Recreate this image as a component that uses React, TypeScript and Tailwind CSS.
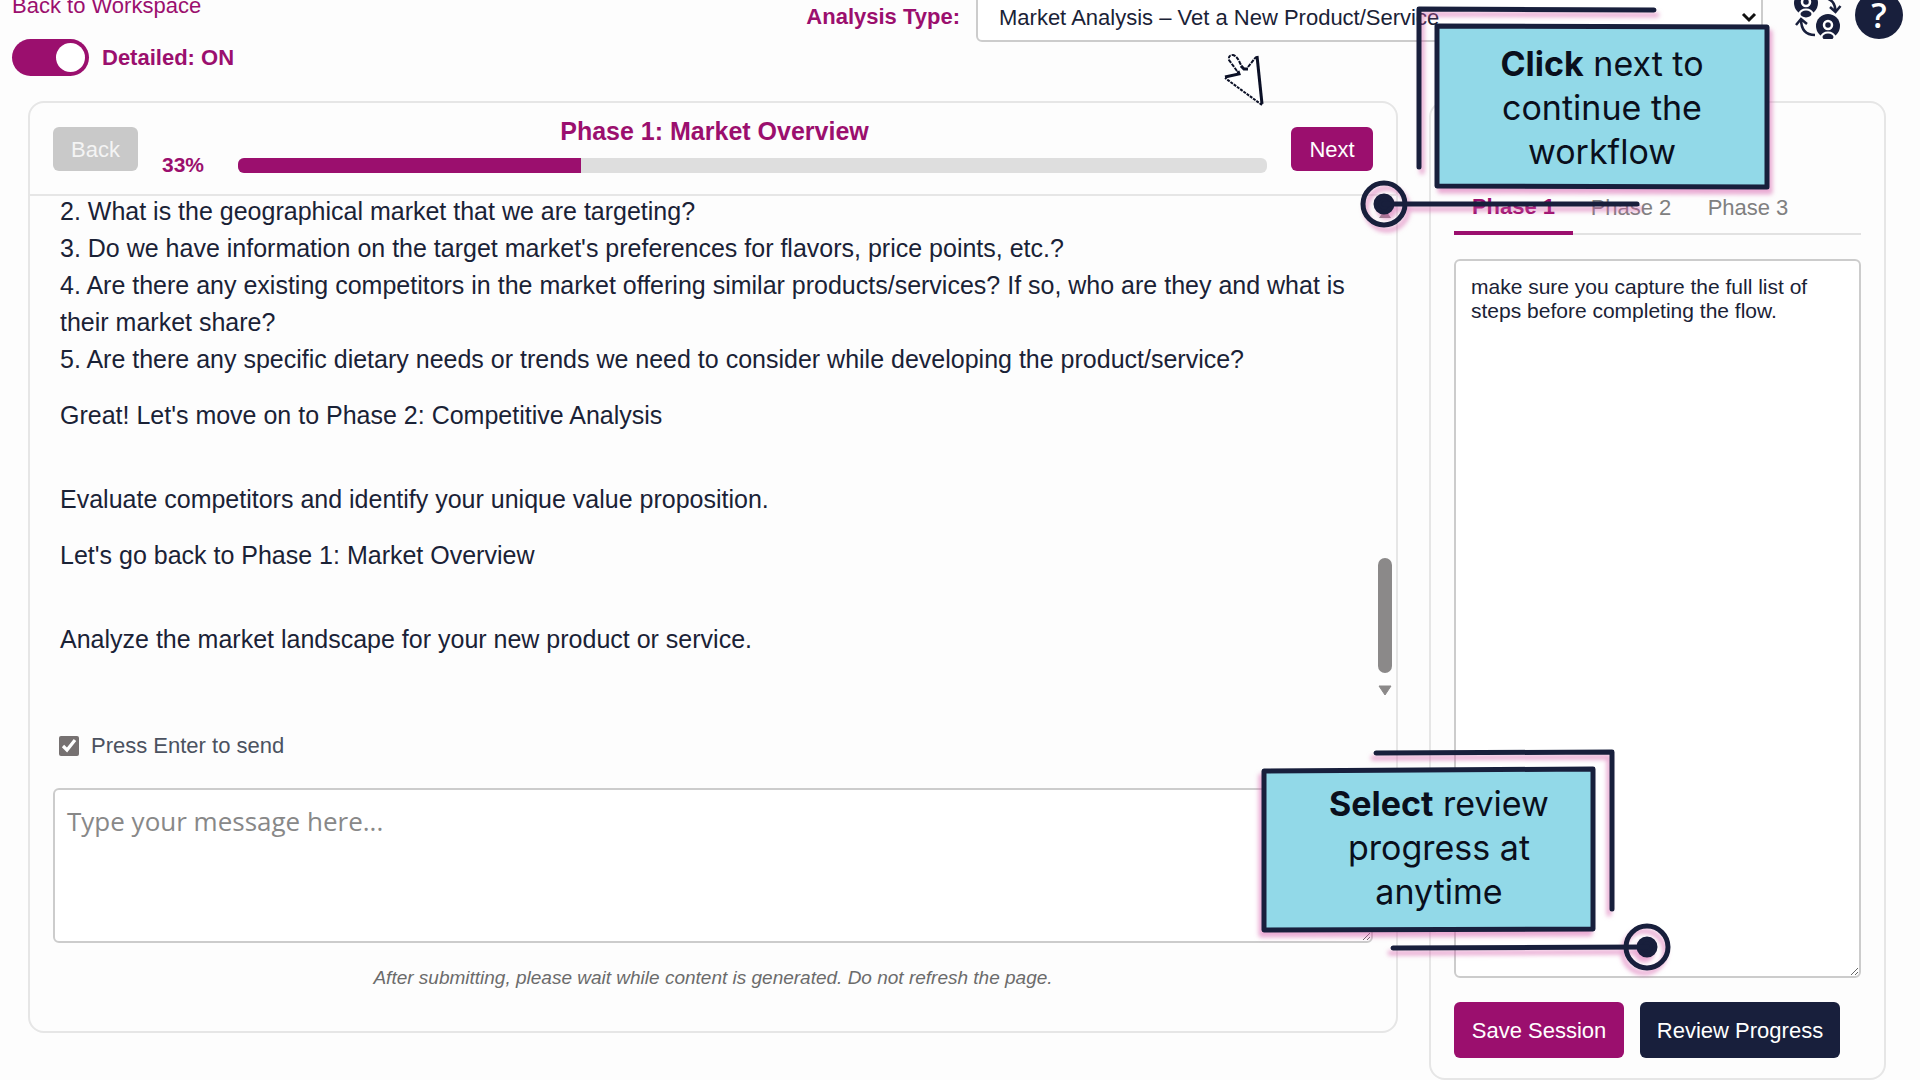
const pink = '#9b0f6e';
const navy = '#181f3c';

const questions = [
  '2. What is the geographical market that we are targeting?',
  "3. Do we have information on the target market's preferences for flavors, price points, etc.?",
  '4. Are there any existing competitors in the market offering similar products/services? If so, who are they and what is their market share?',
  '5. Are there any specific dietary needs or trends we need to consider while developing the product/service?',
];

function SwapUsersIcon() {
  return (
    <svg width="48" height="48" viewBox="0 0 48 48" fill="none">
      <circle cx="12" cy="12" r="12" fill={navy} />
      <circle cx="12" cy="11" r="4" fill={navy} stroke="#fff" strokeWidth="2.500" />
      <ellipse cx="12" cy="23" rx="6.500" ry="4.500" fill={navy} stroke="#fff" strokeWidth="2" />
      <circle cx="34" cy="35" r="12" fill={navy} />
      <circle cx="34" cy="34" r="4" fill={navy} stroke="#fff" strokeWidth="2.500" />
      <ellipse cx="34" cy="46" rx="6.500" ry="4.500" fill={navy} stroke="#fff" strokeWidth="2" />
      <path d="M32 7c6 2 9 5 9.500 13M36 16l5.500 5 5-6" stroke={navy} strokeWidth="2.500" />
      <path d="M21 44c-9 0-14-5-14-16M2 34l5-6 6 5" stroke={navy} strokeWidth="2.500" />
    </svg>
  );
}

function CursorIcon() {
  return (
    <svg className="absolute left-[1222px] top-[51px]" width="44" height="56" viewBox="0 0 44 56" fill="#fff">
      <path d="M35 5L40 54L3 27L17 22L13 18L7 9Q6 4 11 4Q15 5 18 12L20 17H25Z" />
      <g stroke="#0b1026" strokeWidth="2" fill="none">
        <path d="M40 54L3 27" strokeDasharray="3 1" />
        <path d="M3 26L17 23L16 20" strokeWidth="3" />
        <path d="M15 20L7 9Q6 4 11 4Q15 5 18 12L20 16" strokeDasharray="4 1" />
        <path d="M19 15L22 18H26" strokeWidth="3" />
        <path d="M26 16L34 6" strokeDasharray="4 1" />
        <path d="M35 5L40 53" strokeWidth="3" />
      </g>
    </svg>
  );
}

function NextCallout() {
  return (
    <aside className="absolute left-[1350px] top-0 h-[236px] w-[432px]">
      <svg className="absolute inset-0" width="432" height="236" viewBox="0 0 432 236" fill="none">
        <g
          stroke={navy}
          strokeWidth="5"
          strokeLinejoin="round"
          strokeLinecap="round"
          style={{ filter: 'drop-shadow(3px 5px 2px rgba(214,90,170,0.5))' }}
        >
          <path d="M304 10L69 9V167" />
          <path d="M87 26L417 27V187L87 186Z" fill="#92d9e8" />
          <circle cx="34" cy="204" r="21" />
          <circle cx="34" cy="204" r="8" fill={navy} />
          <path d="M34 204H287" />
        </g>
      </svg>
      <p className="absolute left-[122px] top-[42px] w-[260px] text-center font-['Inter'] text-[34px] leading-[44px] text-[#0a0f1c]">
        <b className="font-bold">Click</b> next to continue the workflow
      </p>
    </aside>
  );
}

function ReviewCallout() {
  return (
    <aside className="absolute left-[1250px] top-[740px] h-[240px] w-[430px]">
      <svg className="absolute inset-0" width="430" height="240" viewBox="0 0 430 240" fill="none">
        <g
          stroke={navy}
          strokeWidth="5"
          strokeLinejoin="round"
          strokeLinecap="round"
          style={{ filter: 'drop-shadow(-3px 5px 2px rgba(214,90,170,0.5))' }}
        >
          <path d="M126 13L362 12V169" />
          <path d="M14 31L343 29V189L14 190Z" fill="#92d9e8" />
          <circle cx="397" cy="207" r="21" />
          <circle cx="397" cy="207" r="8" fill={navy} />
          <path d="M143 208L397 207" />
        </g>
      </svg>
      <p className="absolute left-[69px] top-[42px] w-[240px] text-center font-['Inter'] text-[34px] leading-[44px] text-[#0a0f1c]">
        <b className="font-bold">Select</b> review progress at anytime
      </p>
    </aside>
  );
}

export default function App() {
  return (
    <div className="relative h-screen overflow-hidden bg-[#fdfdfd] font-['Liberation_Sans',sans-serif] text-[#1a2236]">
      <header className="-mt-[9px] flex h-[110px] items-start justify-between pl-3 pr-[17px]">
        <div className="flex flex-col gap-[18px]">
          <a href="#workspace" className="text-[22px] leading-[30px]" style={{ color: pink }}>
            Back to Workspace
          </a>
          <label className="flex items-center gap-[13px] text-[22px] font-bold leading-[37px]" style={{ color: pink }}>
            <input type="checkbox" role="switch" defaultChecked className="peer sr-only" />
            <span className="flex h-[37px] w-[77px] items-center justify-end rounded-full bg-[#9b0f6e] pr-1">
              <span className="size-[29px] rounded-full bg-white" />
            </span>
            Detailed: ON
          </label>
        </div>
        <div className="flex items-start">
          <label htmlFor="analysis" className="mr-4 pt-[12px] text-[22px] font-bold leading-[28px]" style={{ color: pink }}>
            Analysis Type:
          </label>
          <div className="relative">
            <select
              id="analysis"
              className="h-[51px] w-[787px] appearance-none rounded-md border-2 border-[#ccc] bg-white px-[21px] pt-[2px] text-[22px]"
            >
              <option>Market Analysis – Vet a New Product/Service</option>
            </select>
            <svg className="pointer-events-none absolute right-[6px] top-[20px]" width="16" height="12" viewBox="0 0 16 12" fill="none">
              <path d="M2 3l6 6 6-6" stroke="#111" strokeWidth="3" />
            </svg>
          </div>
          <button aria-label="Switch users" className="ml-[31px]">
            <SwapUsersIcon />
          </button>
          <button
            aria-label="Help"
            className="ml-[13px] flex size-[48px] items-center justify-center rounded-full bg-[#181f3c] font-['Open_Sans'] text-[34px] font-semibold leading-[48px] text-white"
          >
            ?
          </button>
        </div>
      </header>

      <main className="flex items-start gap-[31px] pl-7 pr-[34px]">
        <section className="flex h-[932px] min-w-0 flex-1 flex-col rounded-2xl border-2 border-[#e6e6e6]">
          <div className="flex h-[93px] items-start border-b-2 border-[#e6e6e6] px-[23px] pt-6">
            <button disabled className="h-[44px] w-[85px] rounded-md bg-[#c9c9c9] text-[22px] text-[#f4f4f4]">
              Back
            </button>
            <div className="mx-6 -mt-[10px] flex-1">
              <h2 className="text-center text-[25px] font-bold leading-[28px]" style={{ color: pink }}>
                Phase 1: Market Overview
              </h2>
              <div className="mt-[10px] flex items-center">
                <span className="w-[76px] text-[21px] font-bold leading-[20px]" style={{ color: pink }}>
                  33%
                </span>
                <div className="h-[15px] flex-1 overflow-hidden rounded-md bg-[#dedede]">
                  <div className="h-full w-1/3 bg-[#9b0f6e]" />
                </div>
              </div>
            </div>
            <button className="h-[44px] w-[82px] rounded-md bg-[#9b0f6e] text-[22px] text-white">Next</button>
          </div>

          <div className="flex h-[511px] justify-between pl-[30px] pr-1">
            <div className="-mt-[3px] w-[1300px] text-[25px] leading-[37px]">
              {questions.map((q) => (
                <p key={q}>{q}</p>
              ))}
              <p className="mt-[19px]">Great! Let's move on to Phase 2: Competitive Analysis</p>
              <p className="mt-[47px]">Evaluate competitors and identify your unique value proposition.</p>
              <p className="mt-[19px]">Let's go back to Phase 1: Market Overview</p>
              <p className="mt-[47px]">Analyze the market landscape for your new product or service.</p>
            </div>
            <div className="flex w-[14px] flex-col items-center pt-3">
              <svg width="14" height="11" viewBox="0 0 14 11">
                <path d="M1 10L7 1l6 9z" fill="#8b8989" />
              </svg>
              <div className="mt-[339px] h-[115px] w-[14px] rounded-full bg-[#8b8989]" />
              <svg className="mt-3" width="14" height="11" viewBox="0 0 14 11">
                <path d="M1 1h12L7 10z" fill="#8b8989" stroke="#8b8989" strokeLinejoin="round" />
              </svg>
            </div>
          </div>

          <div className="px-[23px] pt-6">
            <label className="ml-[6px] flex items-center gap-3 text-[22px] leading-[30px] text-[#4b5260]">
              <input type="checkbox" defaultChecked className="size-5 accent-[#767171]" />
              Press Enter to send
            </label>
            <textarea
              aria-label="Message"
              placeholder="Type your message here..."
              className="mt-[27px] block h-[155px] w-full rounded-md border-2 border-[#ccc] bg-white px-3 py-3 font-['Open_Sans'] text-[26px] leading-[38px] placeholder:text-[#888]"
            />
            <p className="mt-5 text-center text-[19px] italic leading-[30px] text-[#6b6b6b]">
              After submitting, please wait while content is generated. Do not refresh the page.
            </p>
          </div>
        </section>

        <section className="h-[979px] w-[457px] shrink-0 rounded-2xl border-2 border-[#e6e6e6] px-[23px] pt-[78px]">
          <div role="tablist" className="flex h-[54px] items-stretch border-b-2 border-[#e2e2e2] text-[22px] text-[#808080]">
            <button role="tab" className="-mb-[2px] w-[119px] border-b-4 border-[#9b0f6e] font-bold" style={{ color: pink }}>
              Phase 1
            </button>
            <button role="tab" className="w-[116px]">Phase 2</button>
            <button role="tab" className="w-[118px]">Phase 3</button>
          </div>
          <textarea
            aria-label="Phase notes"
            defaultValue="make sure you capture the full list of steps before completing the flow."
            className="mt-6 block h-[719px] w-full rounded-md border-2 border-[#ccc] bg-white px-[15px] py-[14px] text-[21px] leading-[24px]"
          />
          <div className="mt-6 flex gap-4 text-[22px] text-white">
            <button className="h-[56px] w-[170px] rounded-md bg-[#9b0f6e]">Save Session</button>
            <button className="h-[56px] w-[200px] rounded-md bg-[#181f3c]">Review Progress</button>
          </div>
        </section>
      </main>

      <CursorIcon />
      <NextCallout />
      <ReviewCallout />
    </div>
  );
}
